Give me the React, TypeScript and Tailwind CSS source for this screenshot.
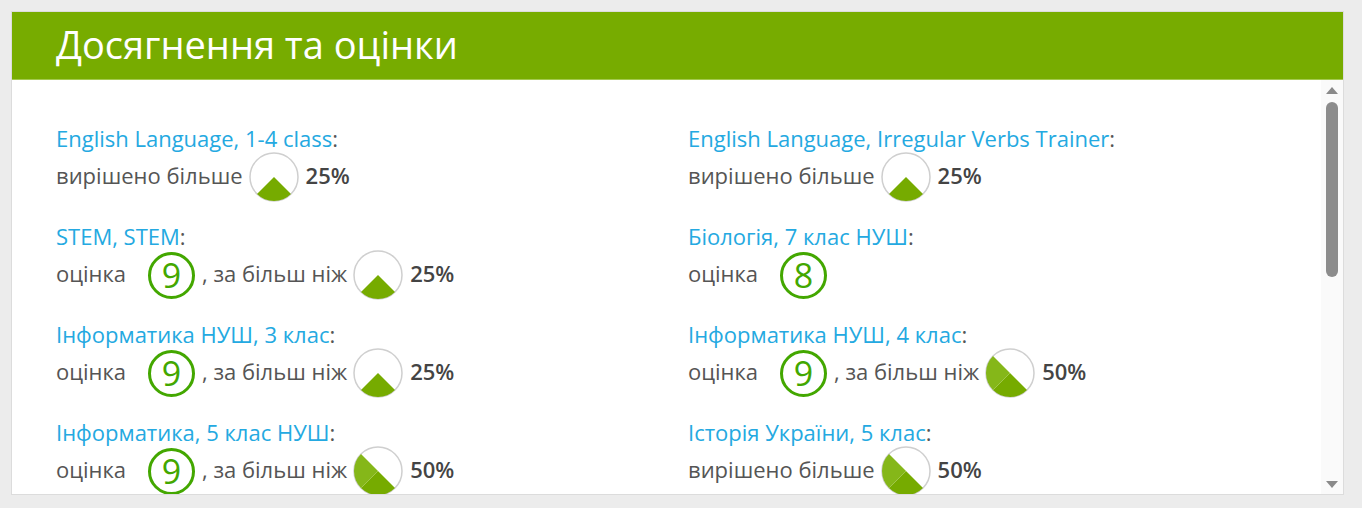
import { FC } from 'react';

type Item = {
  title: string;
  grade?: number;
  percent?: number;
};

const left: Item[] = [
  { title: 'English Language, 1-4 class', percent: 25 },
  { title: 'STEM, STEM', grade: 9, percent: 25 },
  { title: 'Інформатика НУШ, 3 клас', grade: 9, percent: 25 },
  { title: 'Інформатика, 5 клас НУШ', grade: 9, percent: 50 },
];

const right: Item[] = [
  { title: 'English Language, Irregular Verbs Trainer', percent: 25 },
  { title: 'Біологія, 7 клас НУШ', grade: 8 },
  { title: 'Інформатика НУШ, 4 клас', grade: 9, percent: 50 },
  { title: 'Історія України, 5 клас', percent: 50 },
];

// sector from 135deg clockwise, split into quarters with two shades
const Pie: FC<{ percent: number }> = ({ percent }) => {
  const r = 24;
  const c = 25;
  const point = (deg: number) => {
    const rad = (deg * Math.PI) / 180;
    return `${c + r * Math.sin(rad)} ${c - r * Math.cos(rad)}`;
  };
  const quarters = Math.round(percent / 25);
  const shades = ['#76ab00', '#85b719', '#76ab00', '#85b719'];
  return (
    <svg width="50" height="50" viewBox="0 0 50 50" className="shrink-0">
      <circle cx="25" cy="25" r="24" fill="#fff" stroke="#cfcfcf" strokeWidth="1.5" />
      {Array.from({ length: quarters }).map((_, i) => {
        const a = 135 + i * 90;
        return (
          <path
            key={i}
            d={`M25 25 L${point(a)} A${r} ${r} 0 0 1 ${point(a + 90)} Z`}
            fill={shades[i]}
          />
        );
      })}
    </svg>
  );
};

const Grade: FC<{ value: number }> = ({ value }) => (
  <div className="w-[47px] h-[47px] shrink-0 rounded-full border-[3px] border-[#43a700] flex items-center justify-center text-[34px] leading-none text-[#43a700] pb-[1px]">
    {value}
  </div>
);

const Row: FC<Item> = ({ title, grade, percent }) => (
  <div className="mb-[22px]">
    <div className="h-[24px] leading-[24px] mb-[2px] whitespace-nowrap">
      <span className="text-[#24a9e1]">{title}</span>
      <span className="text-[#555]">:</span>
    </div>
    <div className="h-[50px] flex items-center text-[#555] whitespace-nowrap">
      {grade !== undefined ? (
        <>
          <span className="w-[92px] shrink-0 pb-[3px]">оцінка</span>
          <Grade value={grade} />
          {percent !== undefined && <span className="ml-[7px] mr-[6px] pb-[3px]">, за більш ніж</span>}
        </>
      ) : (
        <span className="mr-[6px] pb-[3px]">вирішено більше</span>
      )}
      {percent !== undefined && (
        <>
          <Pie percent={percent} />
          <span className="ml-[7px] pb-[3px] font-semibold text-[#444]">{percent}%</span>
        </>
      )}
    </div>
  </div>
);

const App: FC = () => {
  return (
    <div
      className="w-[1362px] h-[508px] bg-[#ececec] pt-[11px] pl-[11px]"
      style={{ fontFamily: '"Open Sans", "Noto Sans", sans-serif' }}>
      <div className="w-[1333px] h-[484px] bg-white border border-[#dcdcdc] flex flex-col overflow-hidden">
        <div className="h-[68px] shrink-0 bg-[#77ac00] border-b border-[#a4c94f] flex items-center pl-[44px]">
          <h1 className="text-white text-[38px] leading-none pb-[3px]">Досягнення та оцінки</h1>
        </div>
        <div className="flex flex-1 min-h-0">
          <div className="flex-1 overflow-hidden pl-[44px] pt-[46px] text-[22px]">
            <div className="grid grid-cols-[632px_1fr]">
              <div>
                {left.map((it) => (
                  <Row key={it.title} {...it} />
                ))}
              </div>
              <div>
                {right.map((it) => (
                  <Row key={it.title} {...it} />
                ))}
              </div>
            </div>
          </div>
          <div className="w-[22px] shrink-0 bg-[#fafafa] flex flex-col items-center pt-[7px] pb-[6px]">
            <div className="w-0 h-0 border-l-[6px] border-r-[6px] border-b-[7px] border-l-transparent border-r-transparent border-b-[#8a8a8a]" />
            <div className="w-[12px] h-[175px] mt-[8px] rounded-full bg-[#8c8c8c]" />
            <div className="flex-1" />
            <div className="w-0 h-0 border-l-[6px] border-r-[6px] border-t-[7px] border-l-transparent border-r-transparent border-t-[#8a8a8a]" />
          </div>
        </div>
      </div>
    </div>
  );
};

export default App;
